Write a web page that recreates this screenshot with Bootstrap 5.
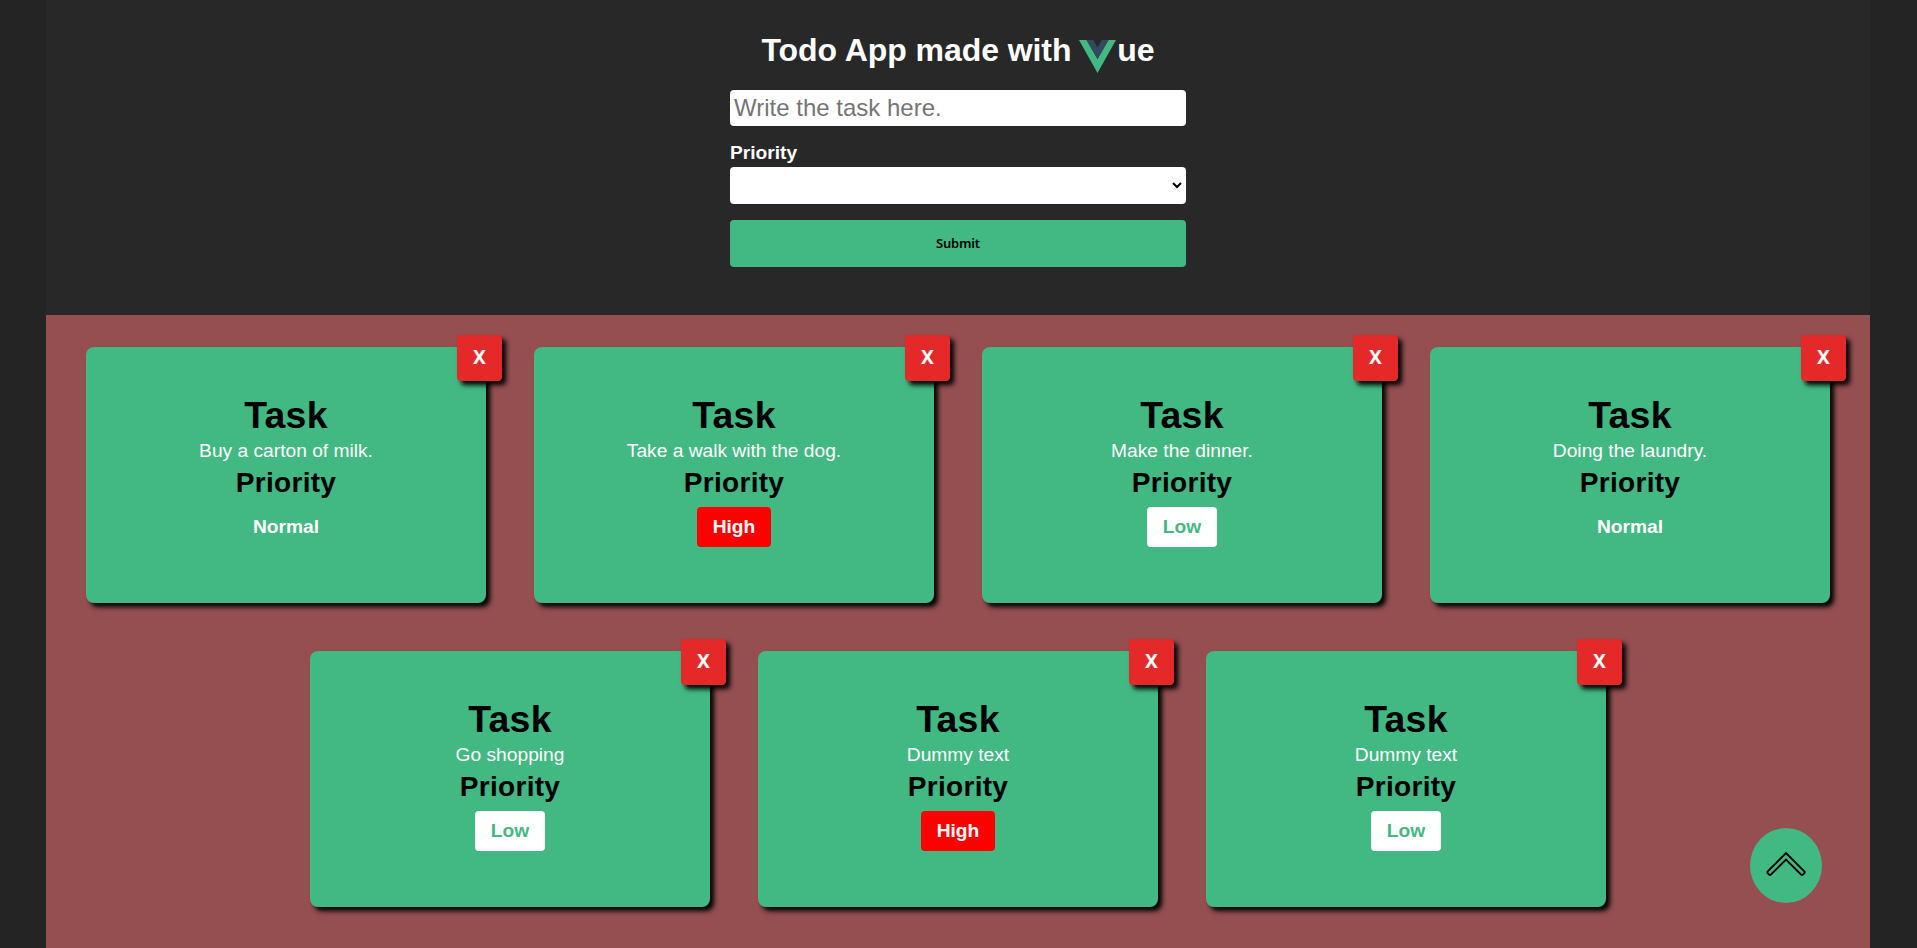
<!DOCTYPE html>
<html lang="en">
<head>
<meta charset="utf-8">
<title>Todo App</title>
<link href="https://cdn.jsdelivr.net/npm/bootstrap@5.3.0/dist/css/bootstrap.min.css" rel="stylesheet">
<style>
body{background:#242424;font-family:"Liberation Sans",Arial,sans-serif;font-size:19.2px;line-height:22px;color:#fff;overflow:hidden;height:948px}
.app-shell{width:1824px;margin-left:46px;min-height:948px}
.app-head{background:#282828;height:315px;padding-top:32px}
.app-head h1{font-size:32px;line-height:37px;height:37px;font-weight:700;letter-spacing:-.06px;margin-bottom:21px}
.vue-mark{width:37px;height:33px;vertical-align:-12px;display:inline-block;margin-left:-1px;margin-right:1px}
.todo-form{width:456px}
.task-field{height:36px;border:0;border-radius:4px;font-size:24px;padding:0 4px;color:#000;line-height:36px}
.task-field::placeholder{color:#757575}
.label-line{margin-top:14px;line-height:25px;padding-bottom:2px}
.prio-field{height:37px;border:0;border-radius:4px;background-color:#fff;padding:0 4px}
.send-btn{height:47px;border:0;border-radius:4px;background:#42b883;color:#000;font-family:"Noto Sans",sans-serif;font-size:13px;letter-spacing:-.2px;font-weight:600;padding:0 0 2px}
.board{background:#954f50;min-height:633px;padding:32px 40px;gap:48px}
.task-card{width:400px;height:256px;background:#42b883;border-radius:8px;box-shadow:4px 4px 5px #000;padding-top:46px}
.task-card h2{font-size:37.4px;line-height:44px;font-weight:700;letter-spacing:.25px;color:#000;margin:0}
.task-card h3{font-size:28px;line-height:34px;font-weight:700;letter-spacing:.3px;color:#000;margin:4px 0 0}
.task-card p{margin:3px 0 0;line-height:22px}
.prio-tag{height:40px;line-height:39px;padding:0 16px;border-radius:4px;font-weight:700;margin-top:7px}
.prio-high{background:#f00}
.prio-low{background:#fff;color:#42b883}
.kill-btn{top:-12px;right:-16px;width:45px;height:46px;border:0;border-radius:4px;background:#e52828;color:#fff;font:700 19.2px/44px "Noto Sans",sans-serif;padding:0 0 2px;box-shadow:4px 4px 5px #000}
.to-top{right:95px;bottom:45px;width:72px;height:75px;border-radius:50%;background:#42b883;border:0;padding:0 0 4px}
</style>
</head>
<body>
<div class="app-shell d-flex flex-column">
<header class="app-head text-center">
<h1>Todo App made with <svg class="vue-mark" viewBox="0 0 37 33"><path fill="#42b883" d="M0 0h7.500l11 19 11-19H37L18.500 33z"/><path fill="#35495e" d="M7.500 0h6.800l4.200 7.500L22.700 0h6.800l-11 19z"/></svg>ue</h1>
<form class="todo-form mx-auto text-start">
<input class="task-field d-block w-100" placeholder="Write the task here.">
<div class="fw-bold label-line">Priority</div>
<div class="prio-field d-flex align-items-center justify-content-end"><svg width="10" height="7" viewBox="0 0 10 7"><path d="M1 1l4 4 4-4" fill="none" stroke="#000" stroke-width="2"/></svg></div>
<button type="button" class="send-btn w-100 mt-3 d-block">Submit</button>
</form>
</header>
<main class="board d-flex flex-wrap justify-content-center align-content-start text-center">
<article class="task-card position-relative d-flex flex-column align-items-center"><button class="kill-btn position-absolute">X</button><h2>Task</h2><p>Buy a carton of milk.</p><h3>Priority</h3><span class="prio-tag">Normal</span></article>
<article class="task-card position-relative d-flex flex-column align-items-center"><button class="kill-btn position-absolute">X</button><h2>Task</h2><p>Take a walk with the dog.</p><h3>Priority</h3><span class="prio-tag prio-high">High</span></article>
<article class="task-card position-relative d-flex flex-column align-items-center"><button class="kill-btn position-absolute">X</button><h2>Task</h2><p>Make the dinner.</p><h3>Priority</h3><span class="prio-tag prio-low">Low</span></article>
<article class="task-card position-relative d-flex flex-column align-items-center"><button class="kill-btn position-absolute">X</button><h2>Task</h2><p>Doing the laundry.</p><h3>Priority</h3><span class="prio-tag">Normal</span></article>
<article class="task-card position-relative d-flex flex-column align-items-center"><button class="kill-btn position-absolute">X</button><h2>Task</h2><p>Go shopping</p><h3>Priority</h3><span class="prio-tag prio-low">Low</span></article>
<article class="task-card position-relative d-flex flex-column align-items-center"><button class="kill-btn position-absolute">X</button><h2>Task</h2><p>Dummy text</p><h3>Priority</h3><span class="prio-tag prio-high">High</span></article>
<article class="task-card position-relative d-flex flex-column align-items-center"><button class="kill-btn position-absolute">X</button><h2>Task</h2><p>Dummy text</p><h3>Priority</h3><span class="prio-tag prio-low">Low</span></article>
</main>
</div>
<button class="to-top position-fixed d-flex align-items-center justify-content-center" aria-label="Back to top"><svg width="40" height="24" viewBox="0 0 40 24"><path d="M20 1L38.500 19.500a1.500 1.500 0 0 1 0 1.500l-1.500 1.500a1.500 1.500 0 0 1-2 0L20 7.500 5 22.500a1.500 1.500 0 0 1-2 0L1.500 21a1.500 1.500 0 0 1 0-1.500z" fill="none" stroke="#000" stroke-width="1.800"/></svg></button>
<script src="https://cdn.jsdelivr.net/npm/bootstrap@5.3.0/dist/js/bootstrap.bundle.min.js"></script>
</body>
</html>
